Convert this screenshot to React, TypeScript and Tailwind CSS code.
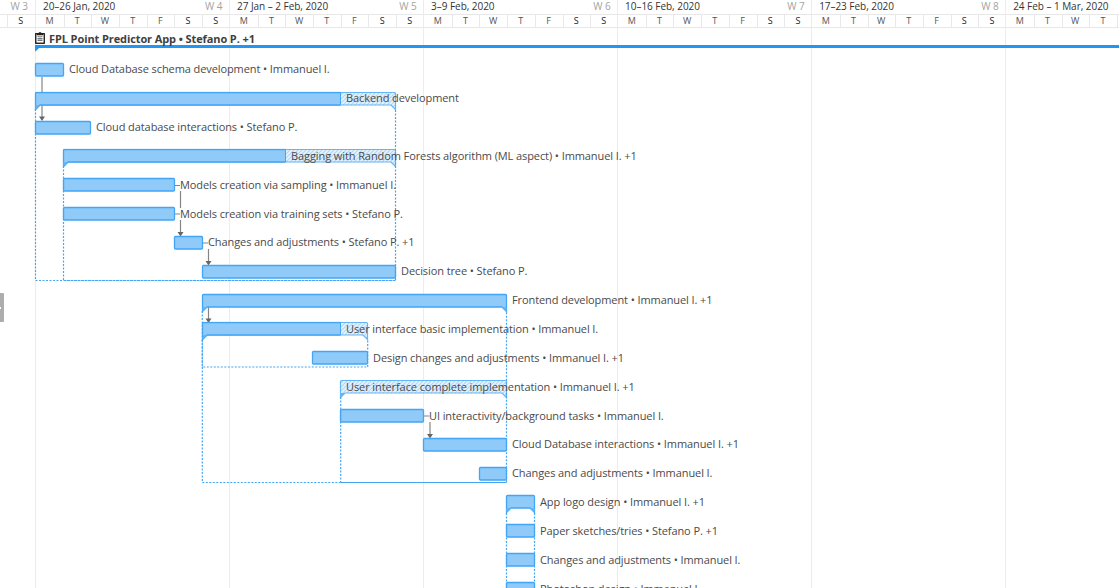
type Task = {
  label: string;
  start: number;
  end: number;
  done?: number;
  group?: boolean;
};

const WEEKS = [
  { range: "20–26 Jan, 2020", week: "W 4" },
  { range: "27 Jan – 2 Feb, 2020", week: "W 5" },
  { range: "3–9 Feb, 2020", week: "W 6" },
  { range: "10–16 Feb, 2020", week: "W 7" },
  { range: "17–23 Feb, 2020", week: "W 8" },
];

const DAYS = ["M", "T", "W", "T", "F", "S", "S"];

const TASKS: Task[] = [
  { label: "Cloud Database schema development • Immanuel I.", start: 0, end: 1 },
  { label: "Backend development", start: 0, end: 13, done: 11, group: true },
  { label: "Cloud database interactions • Stefano P.", start: 0, end: 2 },
  { label: "Bagging with Random Forests algorithm (ML aspect) • Immanuel I. +1", start: 1, end: 13, done: 9, group: true },
  { label: "Models creation via sampling • Immanuel I.", start: 1, end: 5 },
  { label: "Models creation via training sets • Stefano P.", start: 1, end: 5 },
  { label: "Changes and adjustments • Stefano P. +1", start: 5, end: 6 },
  { label: "Decision tree • Stefano P.", start: 6, end: 13 },
  { label: "Frontend development • Immanuel I. +1", start: 6, end: 17, group: true },
  { label: "User interface basic implementation • Immanuel I.", start: 6, end: 12, done: 11, group: true },
  { label: "Design changes and adjustments • Immanuel I. +1", start: 10, end: 12 },
  { label: "User interface complete implementation • Immanuel I. +1", start: 11, end: 17, done: 11, group: true },
  { label: "UI interactivity/background tasks • Immanuel I.", start: 11, end: 14 },
  { label: "Cloud Database interactions • Immanuel I. +1", start: 14, end: 17 },
  { label: "Changes and adjustments • Immanuel I.", start: 16, end: 17 },
  { label: "App logo design • Immanuel I. +1", start: 17, end: 18, group: true },
  { label: "Paper sketches/tries • Stefano P. +1", start: 17, end: 18 },
  { label: "Changes and adjustments • Immanuel I.", start: 17, end: 18 },
  { label: "Photoshop design • Immanuel I.", start: 17, end: 18 },
];

const DAY_X = [35, 63, 90, 118, 146, 174, 202, 229, 257, 285, 312, 340, 367, 395, 423, 451, 479, 506, 534];
const WEEK_X = [35, 229, 423, 617, 811, 1005];

const dayX = (d: number) => DAY_X[d];
const rowY = (i: number) => Math.round(62.9 + i * 28.83);

function Bar({ task, index }: { task: Task; index: number }) {
  const l = dayX(task.start) + 0.5;
  const r = dayX(task.end) + 0.5;
  const t = rowY(index) + 0.5;
  const b = t + 12.5;
  const split = dayX(task.done ?? task.end) + 0.5;
  const shape = task.group
    ? `M${l} ${t + 1}q0-1 1-1H${r - 1}q1 0 1 1V${b + 4.5}L${r - 4.5} ${b}H${l + 4.5}L${l} ${b + 4.5}Z`
    : `M${l} ${t + 1}q0-1 1-1H${r - 1}q1 0 1 1V${b - 1}q0 1-1 1H${l + 1}q-1 0-1-1Z`;
  return (
    <g>
      <clipPath id={`done-${index}`}>
        <rect x={l - 1} y={t - 1} width={Math.max(0, split - l + 1)} height={20} />
      </clipPath>
      {task.done !== undefined && <path d={shape} fill="url(#hatch)" stroke="#64b5f6" strokeWidth="1.2" />}
      {split > l && (
        <g clipPath={task.done !== undefined ? `url(#done-${index})` : undefined}>
          <path d={shape} fill="#90caf9" stroke="#42a5f5" strokeWidth="1.3" />
        </g>
      )}
      {task.done !== undefined && split > l && <path d={`M${split} ${t}V${b}`} stroke="#42a5f5" />}
      {task.group && (
        <path
          d={
            `M${l} ${b}v4.5l4.5-4.5z` +
            (task.done === undefined ? `M${r} ${b}v4.5l-4.5-4.5z` : "")
          }
          fill="#64b5f6"
        />
      )}
    </g>
  );
}

function Arrow({ x, from, to }: { x: number; from: number; to: number }) {
  return (
    <g>
      <path d={`M${x} ${from}V${to - 3}`} stroke="#858585" strokeWidth="1.2" />
      <path d={`M${x - 3} ${to - 4}h6L${x} ${to + 0.5}z`} fill="#666" />
    </g>
  );
}

function Drawing() {
  return (
    <svg className="pointer-events-none absolute left-0 top-0" width="1119" height="588" fill="none">
      <defs>
        <pattern id="hatch" width="4" height="4" patternUnits="userSpaceOnUse">
          <rect width="4" height="4" fill="#e6f3fe" />
          <path d="M-1 1L1-1M0 4L4 0M3 5L5 3" stroke="#aed7fb" strokeWidth="1.1" />
        </pattern>
      </defs>
      {WEEK_X.map((x) => (
        <path key={x} d={`M${x + 0.5} 28V588`} stroke="#ececec" />
      ))}
      <path d="M35 46.5H1119" stroke="#2196f3" strokeWidth="3" />
      <path d="M35 46H41L35.5 51.5L35 51z" fill="#2196f3" />

      <Arrow x={42} from={77} to={120.5} />
      <path d="M180.5 191V208M175 185.5H180M175 214H180M203 243H208M424 416H429.5" stroke="#858585" strokeWidth="1.2" />
      <Arrow x={180.5} from={220} to={236} />
      <Arrow x={208.5} from={249} to={265} />
      <Arrow x={208.5} from={307} to={322.5} />
      <Arrow x={430} from={422} to={438} />

      {TASKS.map((task, i) => (
        <Bar key={i} task={task} index={i} />
      ))}

      <g stroke="#42a5f5" strokeWidth="1.2" strokeDasharray="2 1.5">
        <path d="M35.5 109V280.5H395.5V109" />
        <path d="M63.5 167V280.5H395.5" strokeDashoffset="1" />
        <path d="M202.3 311V482.5H506.5V311" />
        <path d="M202.3 340V367H367.7V340" />
        <path d="M340.7 397V482.5" />
        <path d="M506.5 513V588M534.5 513V588" />
      </g>
      <path d="M341 482.5H506.5" stroke="#42a5f5" />
    </svg>
  );
}

function ClipboardIcon() {
  return (
    <svg width="10" height="13" viewBox="0 0 10 13" fill="none" className="shrink-0">
      <rect x="0.75" y="1.75" width="8.5" height="9.5" fill="#fff" stroke="#111" strokeWidth="1.3" />
      <path d="M2 3.2V1.2H3.6L4 .2H6L6.4 1.2H8V3.2z" fill="#222" />
      <path d="M2.5 4.8h5M2.5 6.6h5M2.5 8.4h5" stroke="#777" strokeWidth="1.1" />
    </svg>
  );
}

function DayCell({ day, weekend, first }: { day: string; weekend: boolean; first: boolean }) {
  return (
    <span
      className={
        "flex w-[27.7px] shrink-0 items-center justify-center border-l pr-[1.4px] text-[9px] leading-[12px] " +
        (first ? "border-transparent " : "border-[#e8e8e8] ") +
        (weekend ? "text-[#222]" : "text-[#555]")
      }
    >
      {day}
    </span>
  );
}

function WeekColumn({ range, week, days }: { range: string; week?: string; days: string[] }) {
  return (
    <div className="flex flex-col border-l border-[#ececec]">
      <div className="flex h-[14px] items-center justify-between pl-[7px] pr-[6.5px] pb-[2px] text-[10px] leading-[12px] tracking-[-0.04px] text-[#333]">
        <span className="whitespace-nowrap">{range}</span>
        {week && <span className="text-[#a3a3a3]">{week}</span>}
      </div>
      <div className="flex h-[14px] border-y border-[#e8e8e8]">
        {days.map((d, i) => (
          <DayCell key={i} day={d} weekend={i > 4} first={i === 0} />
        ))}
        {days.length < 7 && <span className="border-l border-[#e8e8e8]" />}
      </div>
    </div>
  );
}

function Header() {
  return (
    <header className="flex h-7 w-full shrink-0">
      <div className="flex w-[35px] shrink-0 flex-col">
        <div className="flex h-[14px] items-center justify-end pr-[7px] pb-[2px] text-[10px] leading-[12px] text-[#a3a3a3]">W 3</div>
        <div className="flex h-[14px] border-y border-[#e8e8e8] pl-[7px]">
          <DayCell day="S" weekend first={false} />
        </div>
      </div>
      {WEEKS.map((w) => (
        <div key={w.week} className="w-[194.04px] shrink-0">
          <WeekColumn range={w.range} week={w.week} days={DAYS} />
        </div>
      ))}
      <div className="min-w-0 grow">
        <WeekColumn range="24 Feb – 1 Mar, 2020" days={DAYS.slice(0, 4)} />
      </div>
    </header>
  );
}

export default function App() {
  return (
    <main className="relative flex h-[588px] w-[1119px] flex-col overflow-hidden bg-white font-['Open_Sans','Noto_Sans',sans-serif]">
      <Header />
      <Drawing />
      <section className="relative flex flex-col text-[11px] tracking-[-0.09px] text-[#4a4a4a]">
        <div className="flex h-[26.9px] items-start gap-[4px] pl-[35px] pt-[4px] font-bold leading-[14px] tracking-[-0.1px] text-[#404040]">
          <ClipboardIcon />
          <span>FPL Point Predictor App • Stefano P. +1</span>
        </div>
        {TASKS.map((task, i) => (
          <div
            key={i}
            className="flex h-[28.86px] shrink-0 items-center whitespace-nowrap leading-[14px]"
            style={{ paddingLeft: dayX(task.done ?? task.end) + 6 }}
          >
            {task.label}
          </div>
        ))}
      </section>
      <button
        aria-label="Expand panel"
        className="absolute left-0 top-[293px] flex h-[29px] w-1 items-center rounded-r-[1px] bg-[#adadad]"
      >
        <span className="h-[2px] w-px bg-white" />
      </button>
    </main>
  );
}
